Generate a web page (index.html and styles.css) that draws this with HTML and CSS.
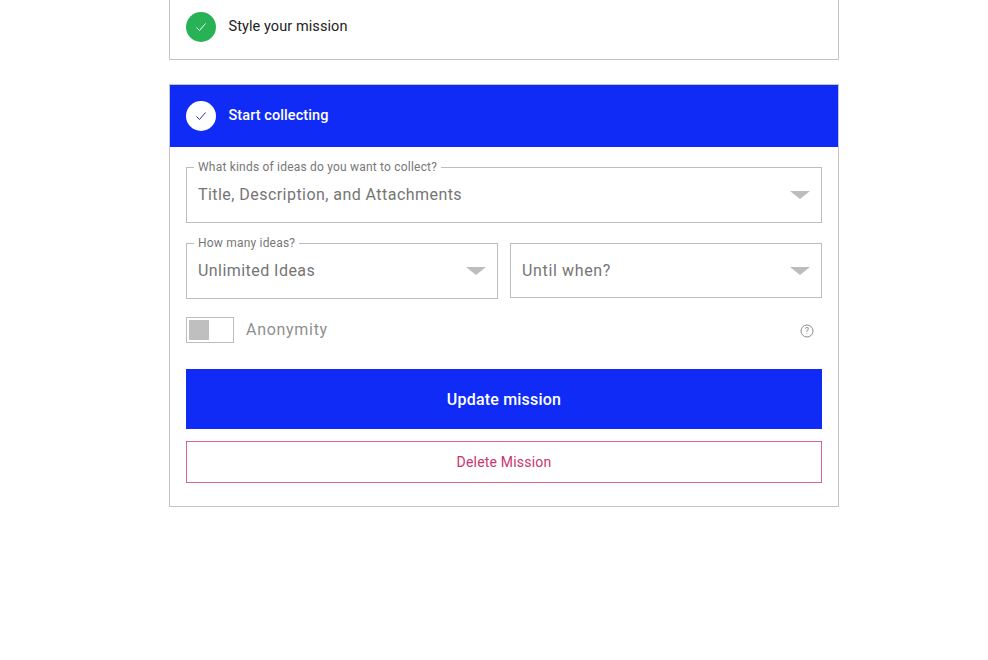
FILE: index.html
```html
<!DOCTYPE html>
<html lang="en">
<head>
    <meta charset="UTF-8">
    <meta name="viewport" content="width=device-width, initial-scale=1.0">
    <title>Edit Mission</title>
    <link rel="stylesheet" href="styles.css">
</head>
<body>

<div class="container">
    <div class="card card-top">
        <div class="step-row">
            <span class="step-icon step-done">
                <svg width="12" height="12" viewBox="0 0 12 12"><path d="M1.5 6.5 4.5 9.5 10.5 2.5" fill="none" stroke="#fff" stroke-width="1"/></svg>
            </span>
            <span class="step-title">Style your mission</span>
        </div>
    </div>

    <div class="card">
        <div class="step-row step-active">
            <span class="step-icon step-current">
                <svg width="12" height="12" viewBox="0 0 12 12"><path d="M1.5 6.5 4.5 9.5 10.5 2.5" fill="none" stroke="#2b2bb8" stroke-width="1"/></svg>
            </span>
            <span class="step-title">Start collecting</span>
        </div>

        <form class="form-body">
            <fieldset class="field field-full">
                <legend>What kinds of ideas do you want to collect?</legend>
                <span class="field-value">Title, Description, and Attachments</span>
                <span class="caret"></span>
            </fieldset>

            <div class="field-row">
                <fieldset class="field">
                    <legend>How many ideas?</legend>
                    <span class="field-value">Unlimited Ideas</span>
                    <span class="caret"></span>
                </fieldset>
                <div class="field field-plain">
                    <span class="field-value field-value-wide">Until when?</span>
                    <span class="caret"></span>
                </div>
            </div>

            <div class="toggle-row">
                <span class="toggle"><span class="toggle-knob"></span></span>
                <span class="toggle-label">Anonymity</span>
                <svg class="help-icon" width="14" height="14" viewBox="0 0 14 14">
                    <circle cx="7" cy="7" r="6" fill="none" stroke="#8c8c8c" stroke-width="1"/>
                    <text x="7" y="10" text-anchor="middle" class="help-mark">?</text>
                </svg>
            </div>

            <button type="button" class="btn-update">Update mission</button>
            <button type="button" class="btn-delete">Delete Mission</button>
        </form>
    </div>
</div>

</body>
</html>
```

FILE: styles.css
```css
body {
    font-family: Roboto, "Liberation Sans", sans-serif;
    background-color: #fff;
    margin: 0;
    padding: 0;
}
.container {
    width: 670px;
    margin-left: 169px;
}
.card {
    border: 1px solid #c4c4c4;
    margin-bottom: 24px;
}
.card-top {
    border-top: none;
    height: 59px;
}
.step-row {
    display: flex;
    align-items: center;
    gap: 12px;
    height: 54px;
    padding-left: 16px;
    color: #222;
}
.step-active {
    height: 62px;
    background-color: #102bf5;
    color: #fff;
    font-weight: 500;
}
.step-icon {
    width: 30px;
    height: 30px;
    border-radius: 50%;
    display: flex;
    align-items: center;
    justify-content: center;
}
.step-done {
    background-color: #27b355;
}
.step-current {
    background-color: #fff;
}
.step-title {
    font-size: 14.5px;
    letter-spacing: 0.08px;
    padding-bottom: 2px;
    margin-left: 0.5px;
}
.form-body {
    padding: 14px 16px 23px;
}
.field {
    position: relative;
    box-sizing: border-box;
    flex: 1;
    height: 62px;
    margin: 0;
    padding: 0 11px 6px;
    border: 1px solid #bdbdbd;
    display: flex;
    align-items: center;
    min-width: 0;
}
.field legend {
    font-size: 12px;
    letter-spacing: 0.2px;
    line-height: 12px;
    color: #777;
    padding: 0 4px;
    margin-left: -4px;
}
.field-full {
    margin-bottom: 14px;
}
.field-plain {
    height: 55px;
    margin-top: 6px;
    padding-bottom: 0;
}
.field-row {
    display: flex;
    align-items: flex-start;
    gap: 12px;
}
.field-value {
    font-size: 16px;
    letter-spacing: 0.45px;
    color: #757575;
}
.field-value-wide {
    letter-spacing: 0.65px;
}
.caret {
    position: absolute;
    right: 11px;
    top: 50%;
    margin-top: -4px;
    border-left: 10px solid transparent;
    border-right: 10px solid transparent;
    border-top: 8px solid #bdbdbd;
}
fieldset .caret {
    margin-top: -7px;
}
.toggle-row {
    display: flex;
    align-items: center;
    margin: 18px 0 26px;
    height: 26px;
}
.toggle {
    box-sizing: border-box;
    width: 48px;
    height: 26px;
    border: 1px solid #bdbdbd;
    padding: 2px;
}
.toggle-knob {
    display: block;
    width: 20px;
    height: 20px;
    background-color: #bfbfbf;
}
.toggle-label {
    margin-left: 12px;
    padding-bottom: 2px;
    font-size: 16px;
    letter-spacing: 0.7px;
    color: #8f8f8f;
}
.help-icon {
    margin-left: auto;
    margin-right: 8px;
    margin-top: 1px;
}
.help-mark {
    font-size: 9px;
    fill: #8c8c8c;
}
.btn-update, .btn-delete {
    display: block;
    width: 100%;
    font-family: inherit;
    cursor: pointer;
}
.btn-update {
    height: 60px;
    border: none;
    background-color: #102bf5;
    color: #fff;
    font-size: 16px;
    font-weight: 500;
    letter-spacing: 0.2px;
    margin-bottom: 12px;
}
.btn-delete {
    height: 42px;
    border: 1px solid #d9648f;
    background-color: #fff;
    color: #c9356e;
    font-size: 14px;
    letter-spacing: 0.2px;
}
```
